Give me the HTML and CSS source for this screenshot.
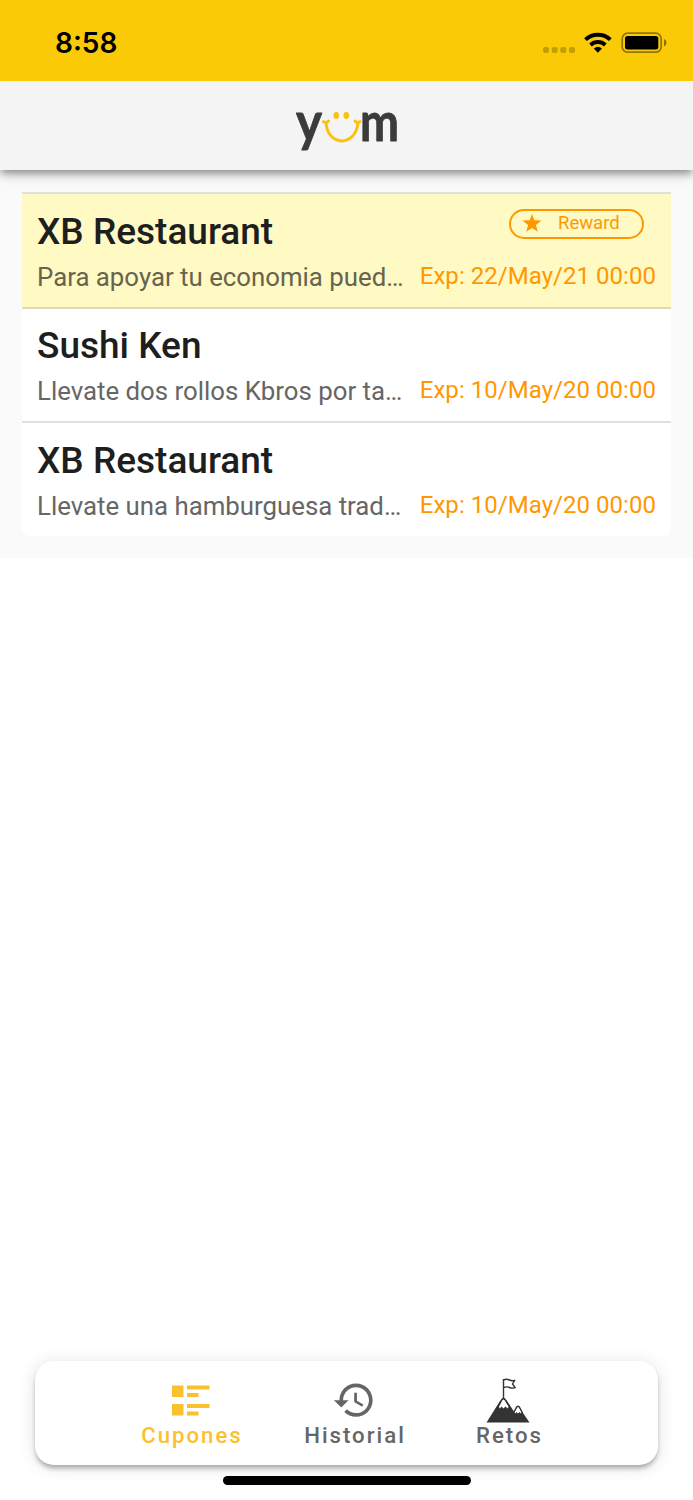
FILE: index.html
```html
<!DOCTYPE html>
<html lang="es">
<head>
<meta charset="utf-8">
<title>Yum</title>
<link rel="stylesheet" href="styles.css">
</head>
<body>
<div class="app">
  <header class="status">
    <span class="time">8:58</span>
    <svg class="status-icons" width="126" height="30" viewBox="0 0 126 30">
      <g fill="#000" opacity=".22"><rect x="3" y="17" width="6" height="6" rx="2"/><rect x="11.700" y="17" width="6" height="6" rx="2"/><rect x="20.300" y="17" width="6" height="6" rx="2"/><rect x="29" y="17" width="6" height="6" rx="2"/></g>
      <g fill="none" stroke="#000" stroke-width="4"><path d="M45.500 9.600a18.200 18.200 0 0 1 24.800 0"/><path d="M50.500 14.900a11 11 0 0 1 14.800 0"/></g>
      <path d="M53.800 18.400a6.400 6.400 0 0 1 8.200 0L57.900 22.700z"/>
      <rect x="82.200" y="3.200" width="39" height="19" rx="5.500" fill="none" stroke="#000" stroke-opacity=".42" stroke-width="1.700"/>
      <rect x="85" y="6" width="33.300" height="13.400" rx="2.500"/>
      <path d="M124 9q2.500 1 2.500 3.700T124 16.400z" opacity=".45"/>
    </svg>
  </header>
  <div class="brand">
    <svg class="logo" width="112" height="80" viewBox="0 -16 112 80">
      <text class="logo-letter" x="5" y="33" textLength="26" lengthAdjust="spacingAndGlyphs">y</text>
      <text class="logo-letter" x="69" y="33" textLength="39" lengthAdjust="spacingAndGlyphs">m</text>
      <g fill="none" stroke="#fcc00d" stroke-width="3" stroke-linecap="round"><path d="M35 14.500C36.500 39 65 39 67 14.500"/><path d="M32.500 13.500Q35 16 37.500 13M64 13Q66.500 16 69 13.500"/></g>
      <g fill="#fcc00d"><ellipse cx="45.200" cy="7.500" rx="2.800" ry="3.400"/><ellipse cx="55.300" cy="7.500" rx="2.800" ry="3.400"/></g>
    </svg>
  </div>
  <main class="content">
    <ul class="list">
      <li class="item reward">
        <div class="head"><h2>XB Restaurant</h2>
          <span class="chip"><svg width="20" height="18" viewBox="0 0 20 18"><path fill="#ff9800" d="M10 0l2.400 6.300 7 .3-5.500 4.400 1.900 6.800L10 14l-5.800 3.800 1.900-6.800L.6 6.600l7-.3z"/></svg><span>Reward</span></span>
        </div>
        <div class="info"><p>Para apoyar tu economia pued…</p><time>Exp: 22/May/21 00:00</time></div>
      </li>
      <li class="item">
        <div class="head"><h2>Sushi Ken</h2></div>
        <div class="info"><p>Llevate dos rollos Kbros por ta…</p><time>Exp: 10/May/20 00:00</time></div>
      </li>
      <li class="item">
        <div class="head"><h2>XB Restaurant</h2></div>
        <div class="info"><p>Llevate una hamburguesa trad…</p><time>Exp: 10/May/20 00:00</time></div>
      </li>
    </ul>
  </main>
  <footer class="bottom">
    <nav class="nav">
      <a class="tab active"><svg width="44" height="48" viewBox="0 0 44 48" fill="#fbc02d"><path d="M3 9.500h11.500v11.500H3zM3 28h11.500v11.500H3zM18 9.500h22.500v4H18zM18 17h11.500v4H18zM18 28h22.500v4H18zM18 35.500h11.500v4H18z"/></svg><span>Cupones</span></a>
      <a class="tab history"><svg width="44" height="48" viewBox="0 0 44 48"><g transform="translate(0 2) scale(1.848)"><path fill="#666" d="M13 3c-4.970 0-9 4.030-9 9H1l3.890 3.890.07.14L9 12H6c0-3.870 3.130-7 7-7s7 3.130 7 7-3.130 7-7 7c-1.930 0-3.680-.79-4.940-2.060l-1.420 1.420C8.270 19.990 10.510 21 13 21c4.970 0 9-4.030 9-9s-4.030-9-9-9zm-1 5v5l4.280 2.540.72-1.210-3.500-2.080V8H12z"/></g></svg><span>Historial</span></a>
      <a class="tab goals"><svg width="44" height="48" viewBox="0 0 44 48"><path fill="#333" d="M.5 46.500 14 25 17.500 21.500 21 25l7 10.500 4-5.500 4 5.500L43.500 46.500z"/><path fill="#fff" d="M12.700 30.500 16.200 24q1.300-1.500 2.600 0l4 6.500-1.300 2-2-2-2 2-2-2-1.500 2zM28.500 36 31 31.200q1-1 2 0l2.700 4.800-.7 1.500-1.500-1.500-1.500 1.500-1.500-1.500-1 1.500z"/><path fill="none" stroke="#333" stroke-width="1.400" d="M17.500 22V3M17.500 4q3-1.500 6 0t5.500 0l-2.500 4 2.500 3.500q-3 1.200-5.500 0t-6 0M12 31 16 23.500q1.500-2 3 0l4.500 7M28 36l2.700-5q1.300-1.300 2.600 0l3.200 6"/></svg><span>Retos</span></a>
    </nav>
    <div class="home-bar"></div>
  </footer>
</div>
</body>
</html>
```
FILE: styles.css
```css
* { box-sizing: border-box; }
body { margin: 0; font-family: Roboto, sans-serif; background: #fff; }
h2, p, ul { margin: 0; padding: 0; }
.app { width: 693px; height: 1500px; display: flex; flex-direction: column; overflow: hidden; }
.status { height: 81px; flex: none; background: #fbca06; display: flex; justify-content: space-between; padding: 0 27px 0 55px; position: relative; z-index: 1; }
.time { font: 600 28px/34px Inter, sans-serif; padding-top: 26px; }
.status-icons { margin-top: 30px; overflow: visible; }
.brand { height: 89px; flex: none; background: #f4f4f4; display: flex; justify-content: center; padding-top: 11px; position: relative; box-shadow: 0 4px 7px -2px rgba(0,0,0,.3), 0 6px 9px rgba(0,0,0,.16), 0 2px 16px rgba(0,0,0,.1); }
.logo { flex: none; overflow: visible; }
.logo-letter { font: 700 54px/60px Lato, sans-serif; fill: #3b3b3b; stroke: #3b3b3b; stroke-width: .8px; stroke-linejoin: round; }
.content { background: #fafafa; padding: 22px; height: 388px; flex: none; }
.list { list-style: none; background: #fff; border-radius: 0 0 8px 8px; }
.item { height: 114.500px; border-top: 2px solid #e0e0e0; padding: 13.800px 15px 0; }
.item.reward { background: #fff9c4; }
.item.reward + .item { border-top-color: #dedabb; }
.head { height: 47.200px; display: flex; justify-content: space-between; }
h2 { font-size: 37px; font-weight: 500; line-height: 47px; color: #1e1e1e; white-space: nowrap; }
.chip { width: 135.500px; height: 30px; border: 2px solid #ff9800; border-radius: 15px; color: #ff9800; display: flex; align-items: center; margin: 1px 12px 0 0; padding-left: 11.500px; gap: 16px; font-size: 18.500px; line-height: 24px; }
.chip svg { flex: none; margin-top: -2px; }
.chip span { margin-top: -2px; }
.info { display: flex; justify-content: space-between; align-items: flex-start; white-space: nowrap; }
p { font-size: 25.800px; line-height: 44px; color: #666; }
.reward p { color: #66644e; }
time { font-size: 24px; line-height: 43px; color: #ff9800; letter-spacing: .04px; }
.bottom { margin-top: auto; height: 139px; padding: 0 35px; display: flex; flex-direction: column; align-items: center; }
.nav { width: 623px; height: 104px; flex: none; background: #fff; border-radius: 19px; box-shadow: 0 4px 5px -1px rgba(0,0,0,.3), 0 2px 18px rgba(0,0,0,.12); display: flex; justify-content: center; padding: 15px 0 0; }
.tab { display: flex; flex-direction: column; align-items: center; width: 163px; color: #666; font-size: 22.200px; font-weight: 500; line-height: 23px; letter-spacing: 2px; }
.tab svg { flex: none; margin-right: 3px; }
.tab.active { color: #fbc02d; }
.tab.goals { width: 146px; }
.home-bar { width: 248px; height: 9px; border-radius: 5px; background: #000; margin-top: 11px; }
```
